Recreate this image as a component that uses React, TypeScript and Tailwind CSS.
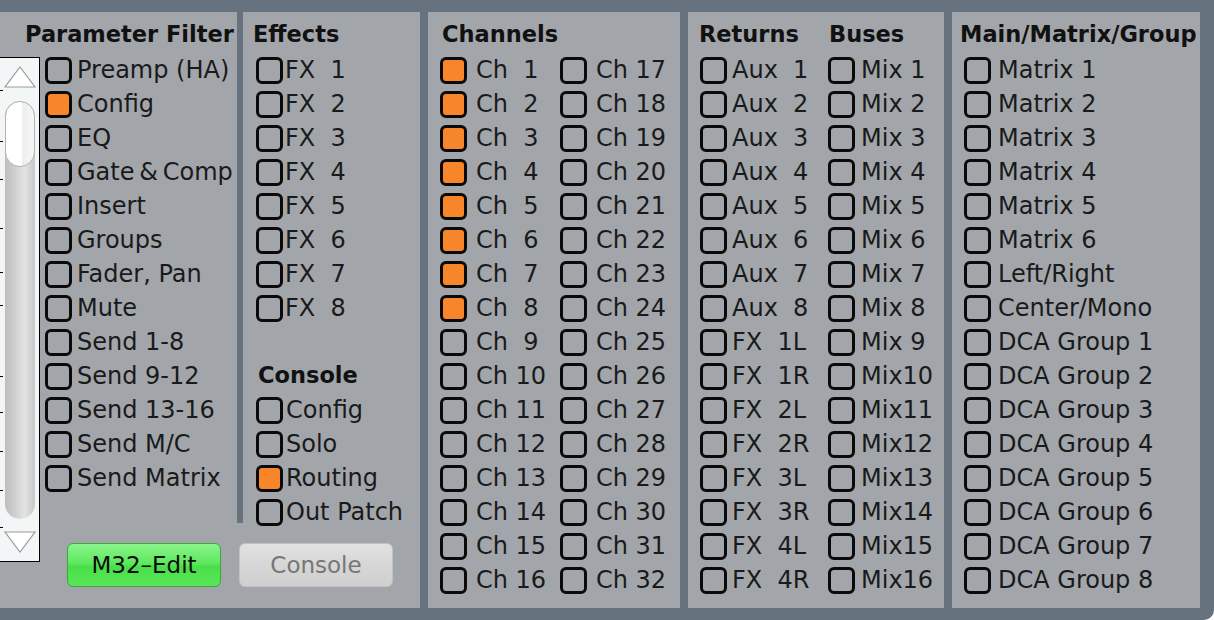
import React from 'react'

// M32 parameter filter panel — five grey groups on a slate frame

const PARAMS: [string, boolean][] = [
  ['Preamp (HA)', false], ['Config', true], ['EQ', false], ['Gate\u2009&\u2009Comp', false],
  ['Insert', false], ['Groups', false], ['Fader, Pan', false], ['Mute', false],
  ['Send 1-8', false], ['Send 9-12', false], ['Send 13-16', false], ['Send M/C', false],
  ['Send Matrix', false],
]

const pad = (n: number) => (n < 10 ? ` ${n}` : `${n}`)

const CH_A = Array.from({ length: 16 }, (_, i) => `Ch ${pad(i + 1)}`)
const CH_B = Array.from({ length: 16 }, (_, i) => `Ch ${pad(i + 17)}`)
const RETURNS = [
  ...Array.from({ length: 8 }, (_, i) => `Aux  ${i + 1}`),
  'FX  1L', 'FX  1R', 'FX  2L', 'FX  2R', 'FX  3L', 'FX  3R', 'FX  4L', 'FX  4R',
]
const BUSES = Array.from({ length: 16 }, (_, i) => `Mix${pad(i + 1)}`)
const MAINS = [
  ...Array.from({ length: 6 }, (_, i) => `Matrix ${i + 1}`),
  'Left/Right', 'Center/Mono',
  ...Array.from({ length: 8 }, (_, i) => `DCA Group ${i + 1}`),
]

function Box({ on }: { on?: boolean }) {
  return (
    <span
      className={
        on
          ? 'h-[27px] w-[27px] shrink-0 rounded-[6px] border-[3px] border-[#0a0a0a] bg-[#f7852a]'
          : 'h-[27px] w-[27px] shrink-0 rounded-[6px] border-[3px] border-[#0a0a0a]'
      }
    />
  )
}

function Row({ label, on, gap }: { label: string; on?: boolean; gap: string }) {
  return (
    <div className={`flex h-[34px] shrink-0 items-center ${gap}`}>
      <Box on={on} />
      <span className="whitespace-pre text-[24px] leading-[34px] text-[#1a1a1a]">{label}</span>
    </div>
  )
}

function Head({ children, className = '' }: { children: React.ReactNode; className?: string }) {
  return (
    <div className={`h-[41px] shrink-0 whitespace-nowrap pt-[7px] text-[22.5px] font-bold leading-[30px] text-[#111] ${className}`}>
      {children}
    </div>
  )
}

function Tri({ down }: { down?: boolean }) {
  return (
    <svg width="32" height="22" viewBox="0 0 32 22" className="shrink-0">
      <polygon
        points={down ? '1,1 31,1 16,21' : '16,1 31,21 1,21'}
        fill="#ffffff"
        stroke="#9a9a9a"
        strokeWidth="1.2"
      />
    </svg>
  )
}

function Scrollbar() {
  return (
    <div className="relative mt-[4px] flex h-[505px] w-[40px] shrink-0 flex-col items-center border-y-[1.5px] border-r-[1.5px] border-black bg-[#f3f6f7]">
      {[32, 83, 121, 170, 214, 247, 318, 354, 393, 432, 469].map((t) => (
        <span key={t} className="absolute left-0 h-[1px] w-[3px] bg-black" style={{ top: t }} />
      ))}
      <div className="mt-[8px]">
        <Tri />
      </div>
      <div className="mt-[13px] h-[418px] w-[30px] shrink-0 rounded-full bg-[linear-gradient(90deg,#bdbdbd,#e2e2e2_65%,#c8c8c8)]">
        <div className="h-[66px] w-full rounded-full border border-[#b3b3b3] bg-[linear-gradient(90deg,#ffffff_55%,#eeeeee_60%,#f6f6f6)]" />
      </div>
      <div className="mt-[12px]">
        <Tri down />
      </div>
    </div>
  )
}

export default function App() {
  return (
    <div className="flex h-[620px] w-[1214px] gap-[8px] overflow-hidden rounded-br-[10px] bg-[#66737e] pb-[12px] pr-[14px] pt-[12px] font-['DejaVu_Sans',sans-serif]">
      {/* parameter filter + effects */}
      <div className="flex w-[420px] shrink-0 flex-col bg-[#a2a6ab]">
        <div className="flex h-[511px] shrink-0">
          <div className="flex w-[237px] shrink-0 flex-col">
            <Head className="pl-[25px]">Parameter Filter</Head>
            <div className="flex shrink-0">
              <Scrollbar />
              <div className="ml-[5px] flex flex-col">
                {PARAMS.map(([l, on]) => (
                  <Row key={l} label={l} on={on} gap="gap-[5px]" />
                ))}
              </div>
            </div>
          </div>
          <div className="w-[6px] shrink-0 bg-[#66737e]" />
          <div className="flex flex-1 flex-col">
            <Head className="pl-[10px]">Effects</Head>
            <div className="flex shrink-0 flex-col pl-[13px]">
              {Array.from({ length: 8 }, (_, i) => (
                <Row key={i} label={`FX  ${i + 1}`} gap="gap-[2px]" />
              ))}
              <div className="h-[34px] shrink-0" />
              <div className="flex h-[34px] shrink-0 items-center pl-[2px] text-[22.5px] font-bold text-[#111]">Console</div>
              <Row label="Config" gap="gap-[3px]" />
              <Row label="Solo" gap="gap-[3px]" />
              <Row label="Routing" on gap="gap-[3px]" />
              <Row label="Out Patch" gap="gap-[3px]" />
            </div>
          </div>
        </div>
        <div className="mt-[20px] flex gap-[18px] pl-[67px]">
          <button className="flex h-[44px] w-[154px] items-center justify-center rounded-[6px] border border-[#3aa83a] bg-[linear-gradient(180deg,#8af48a,#5fe85f_45%,#48df48_55%,#5ae75a)] text-[23px] text-[#0c0c0c]">
            M32–Edit
          </button>
          <button className="flex h-[44px] w-[154px] items-center justify-center rounded-[6px] border border-[#c2c2c2] bg-[linear-gradient(180deg,#e2e2e2,#d6d6d6_50%,#d0d0d0)] text-[23px] text-[#767676]">
            Console
          </button>
        </div>
      </div>

      {/* channels */}
      <div className="flex w-[252px] shrink-0 flex-col bg-[#a2a6ab]">
        <Head className="pl-[14px]">Channels</Head>
        <div className="flex pl-[12px]">
          <div className="flex w-[120px] flex-col">
            {CH_A.map((l, i) => (
              <Row key={l} label={l} on={i < 8} gap="gap-[9px]" />
            ))}
          </div>
          <div className="flex flex-col">
            {CH_B.map((l) => (
              <Row key={l} label={l} gap="gap-[9px]" />
            ))}
          </div>
        </div>
      </div>

      {/* returns + buses */}
      <div className="flex w-[256px] shrink-0 flex-col bg-[#a2a6ab]">
        <div className="flex pl-[11px]">
          <Head className="w-[130px]">Returns</Head>
          <Head>Buses</Head>
        </div>
        <div className="flex pl-[12px]">
          <div className="flex w-[128px] flex-col">
            {RETURNS.map((l) => (
              <Row key={l} label={l} gap="gap-[5px]" />
            ))}
          </div>
          <div className="flex flex-col">
            {BUSES.map((l) => (
              <Row key={l} label={l} gap="gap-[6px]" />
            ))}
          </div>
        </div>
      </div>

      {/* main / matrix / group */}
      <div className="flex w-[248px] shrink-0 flex-col bg-[#a2a6ab]">
        <Head className="pl-[8px]">Main/Matrix/Group</Head>
        <div className="flex flex-col pl-[12px]">
          {MAINS.map((l) => (
            <Row key={l} label={l} gap="gap-[7px]" />
          ))}
        </div>
      </div>
    </div>
  )
}
